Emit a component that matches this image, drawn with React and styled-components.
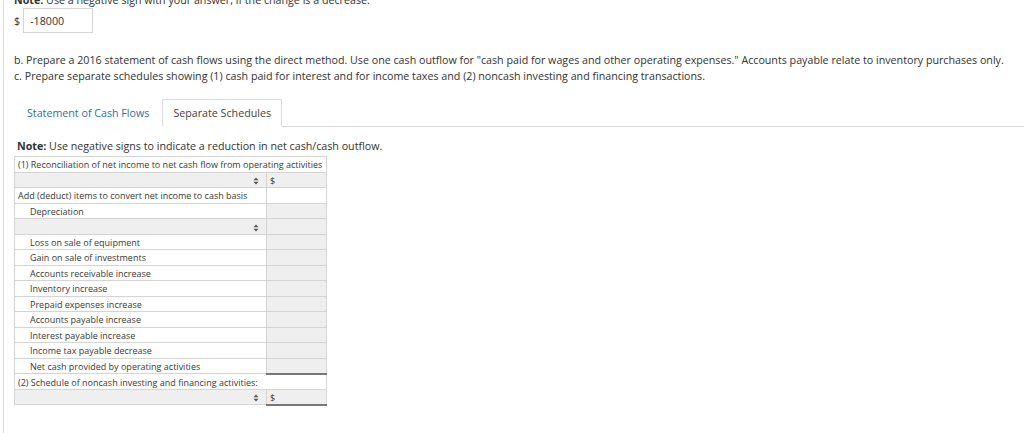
import React from "react";
import styled, { createGlobalStyle } from "styled-components";

const Global = createGlobalStyle`
  html, body { margin: 0; padding: 0; background: #fff; }
  body { font-family: "Open Sans", "Liberation Sans", sans-serif; color: #333; overflow: hidden; }
`;

const Page = styled.div`
  margin-left: 3px;
  border-left: 1px solid #dcdcdc;
  padding-left: 10px;
  height: 433px;
  overflow: hidden;
`;

const TopNote = styled.div`
  font-size: 10.7px;
  line-height: 14px;
  margin-top: -7px;
  white-space: nowrap;
  b { font-weight: 700; }
`;

const AnswerRow = styled.div`
  display: flex;
  align-items: center;
  gap: 3px;
  margin-top: 1px;
  font-size: 10.7px;
  height: 25px;
`;

const AnswerBox = styled.div`
  box-sizing: border-box;
  width: 70px;
  height: 25px;
  border: 1px solid #d6d6d6;
  padding-left: 6px;
  display: flex;
  align-items: center;
  font-size: 10.7px;
`;

const Instructions = styled.div`
  margin-top: 19px;
  font-size: 10.7px;
  line-height: 16px;
  white-space: nowrap;
`;

const Tabs = styled.div`
  display: flex;
  margin-top: 15px;
  border-bottom: 1px solid #dddddd;
  height: 27px;
`;

const Tab = styled.div`
  box-sizing: border-box;
  height: 28px;
  padding: 0 ${p => (p.$active ? "10px" : "12px")};
  display: flex;
  align-items: center;
  font-size: 10.7px;
  color: ${p => (p.$active ? "#444" : "#2f6fa7")};
  background: #fff;
  border: 1px solid ${p => (p.$active ? "#dddddd" : "transparent")};
  border-bottom-color: ${p => (p.$active ? "#fff" : "transparent")};
  margin-bottom: -1px;
`;

const Note = styled.div`
  margin-top: 12px;
  font-size: 10.7px;
  line-height: 14px;
  padding-left: 3px;
  b { font-weight: 700; }
`;

const Table = styled.table`
  margin-top: 3px;
  border-collapse: collapse;
  width: 312px;
  font-size: 9px;
  color: #3a3a3a;
  table-layout: fixed;
`;

const Row = styled.tr`
  height: 15.5px;
`;

const Label = styled.td`
  border: 1px solid #d4d4d4;
  padding: 1px 0 0 ${p => (p.$indent ? "15px" : "3px")};
  white-space: nowrap;
  background: ${p => (p.$gray ? "#efefef" : "#fff")};
  text-align: ${p => (p.$right ? "right" : "left")};
  line-height: 13px;
  vertical-align: middle;
  overflow: hidden;
`;

const Value = styled.td`
  border: 1px solid #d4d4d4;
  padding: 1px 0 0 3px;
  background: ${p => (p.$white ? "#fff" : "#efefef")};
  border-top: ${p => (p.$topLine ? "1px solid #222" : "1px solid #d4d4d4")};
  border-bottom: ${p => (p.$bottomLine ? "2px solid #777" : "1px solid #d4d4d4")};
  line-height: 13px;
  vertical-align: middle;
`;

const ArrowWrap = styled.span`
  display: inline-flex;
  margin-right: 7px;
  vertical-align: middle;
`;

const Arrows = () => (
  <ArrowWrap>
    <svg width="6" height="8" viewBox="0 0 6 8">
      <path d="M0.5 3.3 L3 0.5 L5.5 3.3 Z" fill="#555" />
      <path d="M0.5 4.7 L3 7.5 L5.5 4.7 Z" fill="#555" />
    </svg>
  </ArrowWrap>
);

const items = [
  "Loss on sale of equipment",
  "Gain on sale of investments",
  "Accounts receivable increase",
  "Inventory increase",
  "Prepaid expenses increase",
  "Accounts payable increase",
  "Interest payable increase",
];

export default function App() {
  return (
    <>
      <Global />
      <Page>
        <TopNote>
          <b>Note:</b> Use a negative sign with your answer, if the change is a decrease.
        </TopNote>
        <AnswerRow>
          <span>$</span>
          <AnswerBox>-18000</AnswerBox>
        </AnswerRow>
        <Instructions>
          <div>
            b. Prepare a 2016 statement of cash flows using the direct method. Use one cash outflow for "cash paid for wages and other operating expenses." Accounts payable relate to inventory purchases only.
          </div>
          <div>
            c. Prepare separate schedules showing (1) cash paid for interest and for income taxes and (2) noncash investing and financing transactions.
          </div>
        </Instructions>
        <Tabs>
          <Tab>Statement of Cash Flows</Tab>
          <Tab $active>Separate Schedules</Tab>
        </Tabs>
        <Note>
          <b>Note:</b> Use negative signs to indicate a reduction in net cash/cash outflow.
        </Note>
        <Table>
          <colgroup>
            <col style={{ width: "252px" }} />
            <col style={{ width: "60px" }} />
          </colgroup>
          <tbody>
            <Row>
              <Label colSpan={2}>(1) Reconciliation of net income to net cash flow from operating activities</Label>
            </Row>
            <Row>
              <Label $gray $right><Arrows /></Label>
              <Value>$</Value>
            </Row>
            <Row>
              <Label>Add (deduct) items to convert net income to cash basis</Label>
              <Value $white />
            </Row>
            <Row>
              <Label $indent>Depreciation</Label>
              <Value />
            </Row>
            <Row>
              <Label $gray $right><Arrows /></Label>
              <Value />
            </Row>
            {items.map(t => (
              <Row key={t}>
                <Label $indent>{t}</Label>
                <Value />
              </Row>
            ))}
            <Row>
              <Label $indent>Income tax payable decrease</Label>
              <Value />
            </Row>
            <Row>
              <Label $indent>Net cash provided by operating activities</Label>
              <Value $topLine $bottomLine />
            </Row>
            <Row>
              <Label colSpan={2}>(2) Schedule of noncash investing and financing activities:</Label>
            </Row>
            <Row>
              <Label $gray $right><Arrows /></Label>
              <Value $bottomLine>$</Value>
            </Row>
          </tbody>
        </Table>
      </Page>
    </>
  );
}
